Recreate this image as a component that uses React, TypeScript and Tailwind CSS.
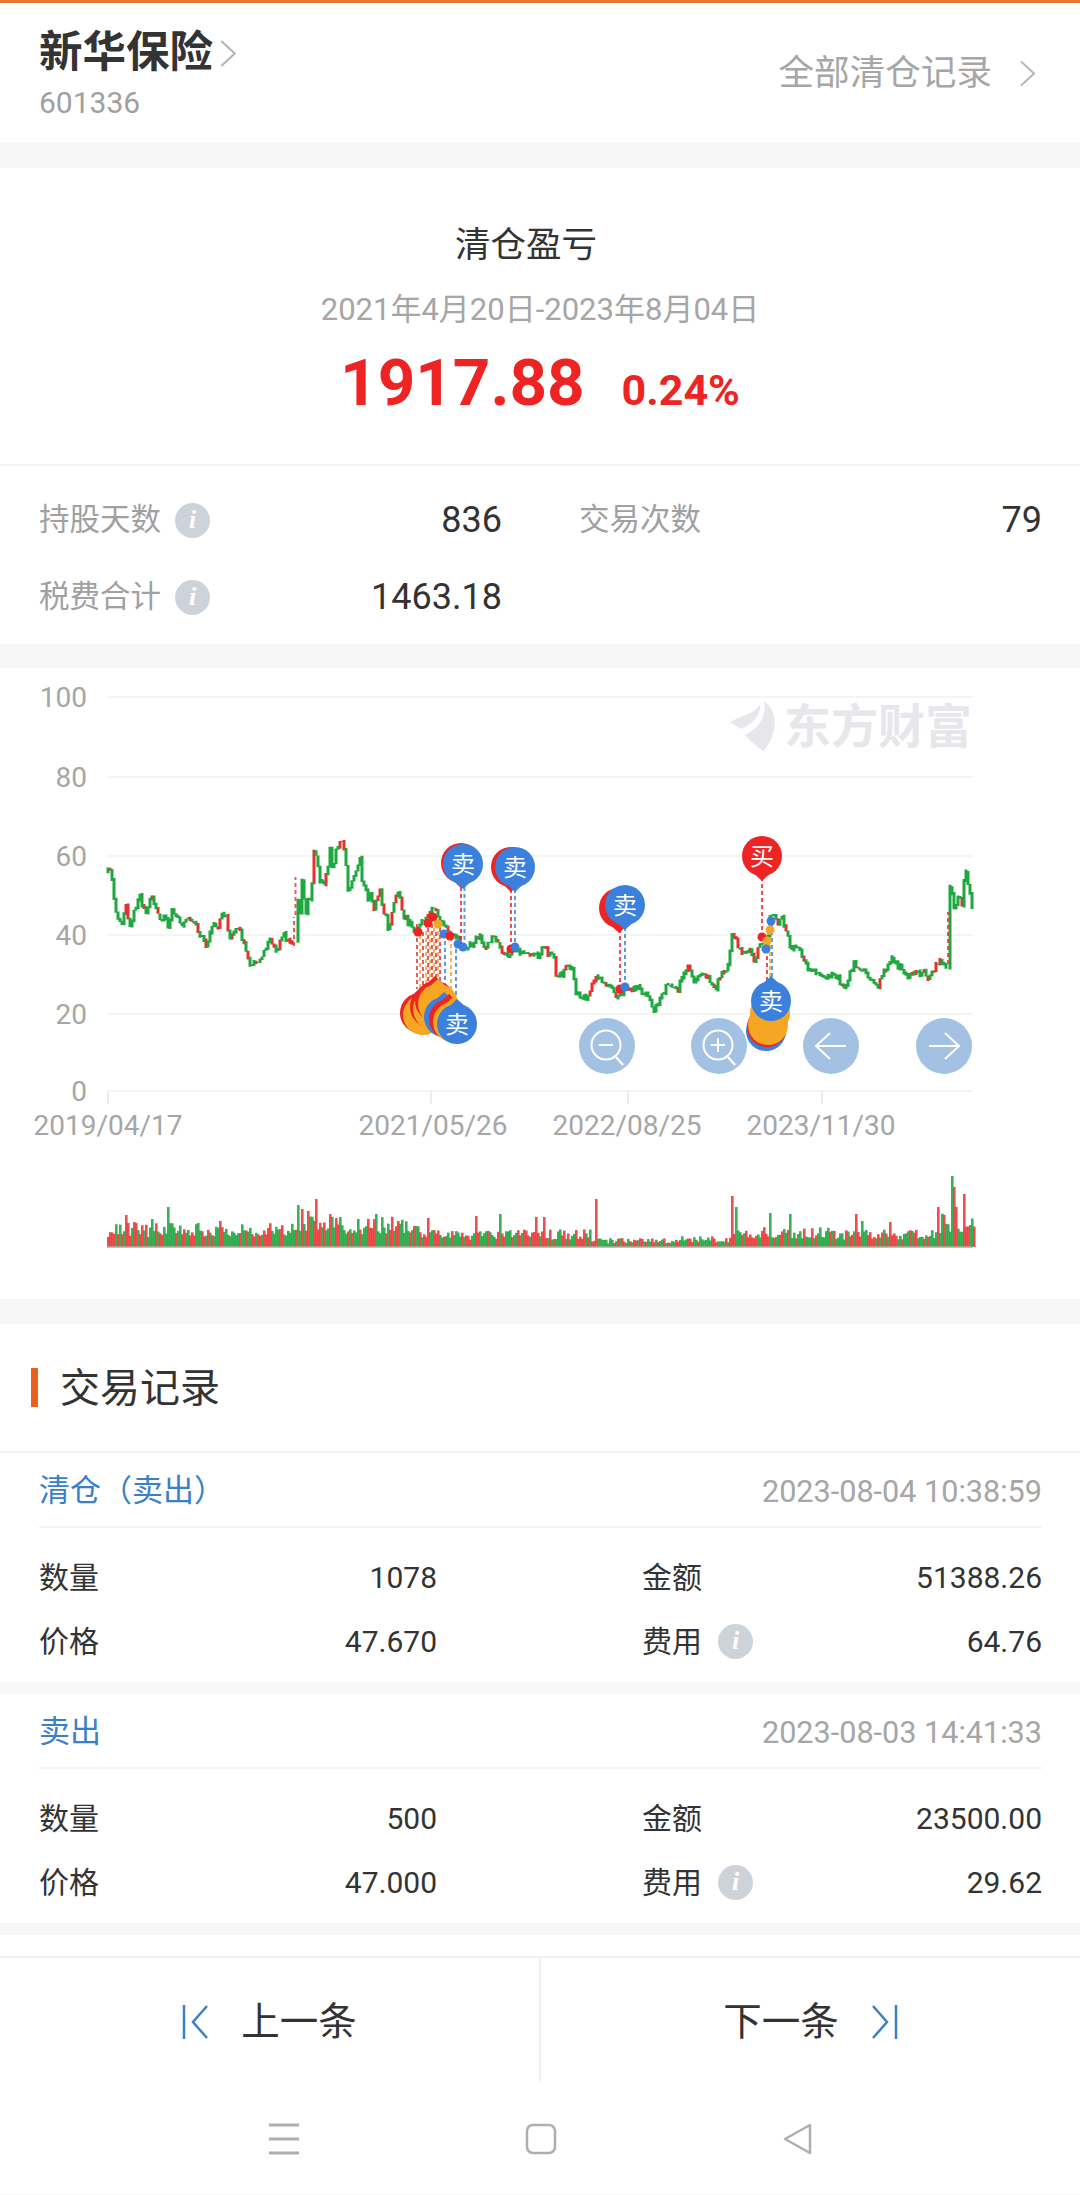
const FONT = "[font-family:Roboto,'Noto_Sans_CJK_SC',sans-serif]";

// 简单的伪随机，保证每次渲染的 K 线一样
function makeRandom(seed: number) {
  let s = seed;
  return () => {
    s = (s * 16807) % 2147483647;
    return s / 2147483647;
  };
}

const pricePoints: [number, number][] = [
  [108, 873], [110, 868], [114, 898], [115, 908], [121, 927], [126, 907], [130, 928], [139, 895], [145, 913], [152, 897],
  [160, 923], [165, 913], [168, 928], [172, 913], [181, 927], [186, 917], [193, 923], [206, 945], [213, 927], [219, 933],
  [220, 917], [227, 917], [229, 942], [238, 928], [244, 943], [251, 968], [262, 955], [270, 940], [277, 952], [282, 935],
  [293, 945], [296, 890], [300, 913], [302, 885], [306, 917], [313, 880], [314, 850], [320, 880], [325, 888], [330, 848],
  [332, 870], [340, 840], [344, 850], [348, 890], [355, 877], [360, 862], [363, 887], [374, 905], [379, 888], [389, 930],
  [396, 893], [406, 920], [417, 933], [432, 908], [444, 928], [458, 938], [463, 953], [479, 937], [486, 950], [494, 935],
  [503, 958], [517, 952], [540, 958], [542, 947], [554, 960], [557, 980], [568, 967], [573, 970], [576, 995], [586, 1000],
  [595, 980], [604, 982], [617, 997], [635, 988], [647, 995], [653, 1012], [669, 983], [678, 990], [688, 968], [695, 982],
  [705, 975], [717, 990], [719, 978], [728, 968], [732, 932], [743, 958], [750, 947], [755, 963], [760, 943], [767, 943],
  [771, 912], [778, 927], [782, 920], [788, 935], [791, 950], [800, 950], [807, 968], [826, 980], [834, 975], [845, 990],
  [854, 963], [867, 975], [877, 988], [891, 958], [907, 977], [924, 973], [929, 982], [939, 962], [947, 967], [950, 885],
  [955, 913], [957, 895], [962, 908], [965, 867], [973, 913],
];

function priceAt(x: number) {
  for (let i = 1; i < pricePoints.length; i++) {
    const [x0, y0] = pricePoints[i - 1];
    const [x1, y1] = pricePoints[i];
    if (x <= x1) return y0 + ((y1 - y0) * (x - x0)) / (x1 - x0);
  }
  return 913;
}

function buildCandles() {
  const rnd = makeRandom(4711);
  let green = "";
  let red = "";
  let prev = priceAt(108);
  for (let x = 108; x <= 973; x += 2) {
    // 两段跳空用虚线单独画
    if ((x > 293 && x < 297) || (x > 947 && x < 950)) continue;
    // 2020 年波动大，抖动也放大一点
    const swing = x > 295 && x < 420 ? 12 : 7;
    const y = priceAt(x) + (rnd() - 0.5) * swing;
    const top = Math.min(prev, y) - rnd() * 2;
    const bottom = Math.max(prev, y) + rnd() * 2;
    const seg = `M${x} ${top.toFixed(1)}V${bottom.toFixed(1)}`;
    if (rnd() < 0.2) red += seg;
    else green += seg;
    prev = y;
  }
  return { green, red };
}

const volumeSpikes: Record<number, { h: number; up: boolean }> = {
  125: { h: 32, up: true }, 133: { h: 25, up: true }, 151: { h: 28, up: false }, 167: { h: 40, up: false },
  219: { h: 26, up: true }, 297: { h: 42, up: false }, 301: { h: 38, up: true }, 307: { h: 36, up: true },
  315: { h: 48, up: true }, 329: { h: 33, up: true }, 357: { h: 28, up: false }, 375: { h: 33, up: false },
  397: { h: 26, up: true }, 427: { h: 29, up: true }, 475: { h: 31, up: true }, 499: { h: 33, up: false },
  535: { h: 30, up: true }, 543: { h: 30, up: true }, 595: { h: 48, up: true }, 731: { h: 51, up: true },
  735: { h: 40, up: false }, 769: { h: 34, up: false }, 789: { h: 33, up: false }, 855: { h: 33, up: true },
  861: { h: 26, up: false }, 889: { h: 25, up: true }, 937: { h: 40, up: true }, 951: { h: 71, up: false },
  953: { h: 60, up: true }, 955: { h: 40, up: true }, 963: { h: 53, up: true }, 969: { h: 22, up: false },
};

function volumeBase(x: number) {
  if (x < 294) return 22;
  if (x < 420) return 28;
  if (x < 590) return 16;
  if (x < 680) return 8;
  if (x < 730) return 10;
  if (x < 830) return 18;
  if (x < 940) return 16;
  return 32;
}

function buildVolumes() {
  const rnd = makeRandom(2024);
  const bars: { x: number; h: number; up: boolean }[] = [];
  for (let x = 107; x <= 973; x += 2) {
    const spike = volumeSpikes[x];
    const base = volumeBase(x);
    const r = rnd();
    const up = rnd() < 0.45;
    if (spike) bars.push({ x, h: spike.h, up: spike.up });
    else bars.push({ x, h: base * (0.45 + r * 0.65), up });
  }
  return bars;
}

const candles = buildCandles();
const volumes = buildVolumes();

const BLUE = "#3a80dc";
const RED = "#ee2424";
const ORANGE = "#f5a623";

function Pin({ x, y, color, label, up }: { x: number; y: number; color: string; label?: string; up?: boolean }) {
  const tip = up ? y - 25 : y + 25;
  const side = up ? y - 9 : y + 9;
  return (
    <g>
      <path d={`M${x - 17} ${side}L${x} ${tip}L${x + 17} ${side}Z`} fill={color} />
      <circle cx={x} cy={y} r={20} fill={color} />
      {label && (
        <text x={x} y={y + 1} fill="#fff" fontSize={24} textAnchor="middle" dominantBaseline="central">
          {label}
        </text>
      )}
    </g>
  );
}

function DashLine({ x, y1, y2, color }: { x: number; y1: number; y2: number; color: string }) {
  return <line x1={x} x2={x} y1={y1} y2={y2} stroke={color} strokeWidth={2} strokeDasharray="4 3" opacity={0.8} />;
}

function Dot({ x, y, color }: { x: number; y: number; color: string }) {
  return <circle cx={x} cy={y} r={4.5} fill={color} />;
}

function ZoomButton({ x, plus }: { x: number; plus?: boolean }) {
  return (
    <g stroke="#fff" strokeWidth={2} fill="none">
      <circle cx={x} cy={1047} r={28} fill="#a3c2e3" stroke="none" />
      <circle cx={x - 1} cy={1046} r={14.5} />
      <path d={`M${x + 9} ${1058}L${x + 16} ${1066}`} />
      <path d={`M${x - 8} 1046H${x + 6}`} />
      {plus && <path d={`M${x - 1} 1039V1053`} />}
    </g>
  );
}

function ArrowButton({ x, right }: { x: number; right?: boolean }) {
  const d = right
    ? `M${x - 15} 1047H${x + 15}M${x + 1} 1034L${x + 15} 1047L${x + 1} 1060`
    : `M${x + 15} 1047H${x - 15}M${x - 1} 1034L${x - 15} 1047L${x - 1} 1060`;
  return (
    <g stroke="#fff" strokeWidth={2} fill="none">
      <circle cx={x} cy={1047} r={28} fill="#a3c2e3" stroke="none" />
      <path d={d} />
    </g>
  );
}

function TradeChart() {
  const grid = [
    { y: 698, label: "100" },
    { y: 778, label: "80" },
    { y: 857, label: "60" },
    { y: 936, label: "40" },
    { y: 1015, label: "20" },
    { y: 1092, label: "0" },
  ];
  const ticks = [
    { x: 108, label: "2019/04/17", tx: 108 },
    { x: 431, label: "2021/05/26", tx: 433 },
    { x: 628, label: "2022/08/25", tx: 627 },
    { x: 822, label: "2023/11/30", tx: 821 },
  ];
  return (
    <svg viewBox="0 669 1080 631" className="block h-[631px] w-[1080px]">
      {grid.map((g) => (
        <g key={g.y}>
          <line x1={108} x2={973} y1={g.y} y2={g.y} stroke="#f4f4f5" strokeWidth={2} />
          <text x={87} y={g.y} fill="#a6a6a6" fontSize={28} textAnchor="end" dominantBaseline="central">
            {g.label}
          </text>
        </g>
      ))}
      {ticks.map((t) => (
        <g key={t.x}>
          <line x1={t.x} x2={t.x} y1={1092} y2={1105} stroke="#ececec" strokeWidth={2} />
          <text x={t.tx} y={1126} fill="#a6a6a6" fontSize={28} textAnchor="middle" dominantBaseline="central">
            {t.label}
          </text>
        </g>
      ))}

      {/* 水印 */}
      <path d="M764 702C778 712 779 732 764 752C757 748 750 742 745 736C758 730 767 718 764 702Z" fill="#e7e7eb" />
      <path d="M730 723C742 716 752 716 760 706C761 716 752 726 741 730Z" fill="#e7e7eb" />
      <text x={784} y={727} fill="#e7e7eb" fontSize={47} fontWeight={700} dominantBaseline="central">
        东方财富
      </text>

      <path d={candles.red} stroke="#e8302f" strokeWidth={3} fill="none" />
      <path d={candles.green} stroke="#1fa83f" strokeWidth={3} fill="none" />
      <DashLine x={294} y1={947} y2={918} color="#e8302f" />
      <DashLine x={295.5} y1={916} y2={878} color="#e8302f" />
      <DashLine x={948} y1={965} y2={913} color="#e8302f" />

      {/* 成交量 */}
      {volumes.map((v) => (
        <rect key={v.x} x={v.x} y={1248 - v.h} width={2.6} height={v.h} fill={v.up ? "#ee3a3a" : "#22a845"} opacity={0.9} />
      ))}
      <line x1={107} x2={973} y1={1248} y2={1248} stroke="#b9a9a0" strokeWidth={1.5} />

      {/* 5 月附近的一簇买卖点 */}
      {[417, 420, 423, 426, 428, 430, 432, 434, 436, 438, 440].map((x, i) => (
        <DashLine key={x} x={x} y1={925 + (i % 3) * 4} y2={990} color={i % 2 ? "#f2a13a" : "#e8302f"} />
      ))}
      <DashLine x={445} y1={935} y2={1000} color={BLUE} />
      <DashLine x={451} y1={938} y2={1000} color={ORANGE} />
      <DashLine x={456} y1={943} y2={1005} color={BLUE} />
      <Dot x={418} y={933} color={RED} />
      <Dot x={428} y={924} color={RED} />
      <Dot x={433} y={918} color={RED} />
      <Dot x={438} y={925} color={ORANGE} />
      <Dot x={444} y={935} color={BLUE} />
      <Dot x={450} y={937} color={RED} />
      <Dot x={458} y={945} color={BLUE} />
      <Dot x={463} y={948} color={BLUE} />
      <Dot x={511} y={950} color={RED} />
      <Dot x={515} y={948} color={BLUE} />

      <Pin x={420} y={1014} color={RED} up />
      <Pin x={423} y={1016} color={ORANGE} up />
      <Pin x={430} y={1008} color={RED} up />
      <Pin x={433} y={1010} color={ORANGE} up />
      <Pin x={435} y={1002} color={RED} up />
      <Pin x={438} y={1005} color={ORANGE} up />
      <Pin x={444} y={1018} color={BLUE} up />
      <Pin x={449} y={1020} color={RED} up />
      <Pin x={453} y={1023} color={ORANGE} up />
      <Pin x={457} y={1025} color={BLUE} up label="卖" />

      <DashLine x={461} y1={888} y2={945} color={RED} />
      <DashLine x={464.5} y1={888} y2={945} color={BLUE} />
      <Pin x={461} y={864} color={RED} />
      <Pin x={463} y={865} color={BLUE} label="卖" />
      <DashLine x={511} y1={890} y2={948} color={RED} />
      <DashLine x={515} y1={890} y2={948} color={BLUE} />
      <Pin x={511} y={868} color={RED} />
      <Pin x={515} y={868} color={BLUE} label="卖" />

      <DashLine x={620} y1={930} y2={990} color={RED} />
      <DashLine x={625} y1={928} y2={988} color={BLUE} />
      <Dot x={620} y={990} color={RED} />
      <Dot x={625} y={988} color={BLUE} />
      <Pin x={619} y={909} color={RED} />
      <Pin x={625} y={906} color={BLUE} label="卖" />

      <DashLine x={762} y1={878} y2={938} color={RED} />
      <Dot x={762} y={938} color={RED} />
      <Pin x={762} y={857} color={RED} label="买" />

      <ZoomButton x={607} />
      <ZoomButton x={719} plus />
      <ArrowButton x={831} />
      <ArrowButton x={944} right />

      <DashLine x={767} y1={950} y2={990} color={RED} />
      <DashLine x={770} y1={925} y2={985} color={ORANGE} />
      <DashLine x={772} y1={925} y2={985} color={BLUE} />
      <Dot x={771} y={922} color={BLUE} />
      <Dot x={770} y={931} color={ORANGE} />
      <Dot x={767} y={942} color={ORANGE} />
      <Dot x={766} y={950} color={BLUE} />
      <Pin x={766} y={1032} color={BLUE} up />
      <Pin x={767} y={1028} color={RED} up />
      <Pin x={768} y={1026} color={ORANGE} up />
      <Pin x={770} y={1014} color={ORANGE} up />
      <Pin x={771} y={1002} color={BLUE} up label="卖" />
    </svg>
  );
}

function InfoIcon() {
  return (
    <span className="flex h-[35px] w-[35px] shrink-0 items-center justify-center rounded-full bg-[#ced3da] text-[26px] font-bold italic leading-none text-white [font-family:'Liberation_Serif',serif]">
      i
    </span>
  );
}

function Chevron({ className }: { className: string }) {
  return (
    <svg viewBox="0 0 16 28" fill="none" stroke="#b3b3b3" strokeWidth={2} className={className}>
      <path d="M1 1L15 14L1 27" />
    </svg>
  );
}

function Stat({ label, value, info }: { label: string; value: string; info?: boolean }) {
  return (
    <div className="flex h-10 flex-1 items-center">
      <span className="text-[30.5px] text-[#a0a0a0]">{label}</span>
      {info && (
        <span className="ml-[14px]">
          <InfoIcon />
        </span>
      )}
      <span className="ml-auto text-[36px] text-[#333]">{value}</span>
    </div>
  );
}

type Trade = {
  kind: string;
  time: string;
  amount: string;
  total: string;
  price: string;
  fee: string;
};

const trades: Trade[] = [
  { kind: "清仓（卖出）", time: "2023-08-04 10:38:59", amount: "1078", total: "51388.26", price: "47.670", fee: "64.76" },
  { kind: "卖出", time: "2023-08-03 14:41:33", amount: "500", total: "23500.00", price: "47.000", fee: "29.62" },
];

function TradeRow({ label, value, info }: { label: string; value: string; info?: boolean }) {
  return (
    <div className="flex h-16 items-center">
      <span className="text-[30px] text-[#333]">{label}</span>
      {info && (
        <span className="ml-[16px]">
          <InfoIcon />
        </span>
      )}
      <span className="ml-auto text-[30px] text-[#333]">{value}</span>
    </div>
  );
}

function TradeCard({ trade }: { trade: Trade }) {
  return (
    <div className="h-[229px] bg-white pl-[39px] pr-[38px]">
      <div className="flex h-[75px] items-center justify-between border-b-2 border-[#f4f4f4] pt-[4px]">
        <span className="text-[31px] text-[#3a80c8]">{trade.kind}</span>
        <span className="text-[30.6px] text-[#a6a6a6]">{trade.time}</span>
      </div>
      <div className="flex pt-[17px]">
        <div className="w-[398px]">
          <TradeRow label="数量" value={trade.amount} />
          <TradeRow label="价格" value={trade.price} />
        </div>
        <div className="ml-[205px] flex-1">
          <TradeRow label="金额" value={trade.total} />
          <TradeRow label="费用" value={trade.fee} info />
        </div>
      </div>
    </div>
  );
}

export default function App() {
  return (
    <div className={`${FONT} h-[2195px] w-[1080px] overflow-hidden bg-[#f7f7f7]`}>
      <div className="h-[3px] bg-[#e8792e]" />

      {/* 顶部股票名 */}
      <div className="flex h-[139px] items-center justify-between bg-white px-[39px] pt-[3px]">
        <div>
          <div className="flex h-[52px] items-center">
            <span className="text-[43.5px] font-bold text-[#333]">新华保险</span>
            <Chevron className="ml-[7px] h-[27px] w-[16px]" />
          </div>
          <div className="mt-[6px] text-[30px] leading-9 text-[#a0a0a0]">601336</div>
        </div>
        <div className="flex items-center">
          <span className="text-[35.6px] text-[#a6a6a6]">全部清仓记录</span>
          <Chevron className="ml-[28px] mr-[6px] h-[27px] w-[15px]" />
        </div>
      </div>

      <div className="mt-[26px] bg-white">
        <div className="flex h-[298px] flex-col items-center border-b-2 border-[#f5f5f5] pt-[53px]">
          <div className="mr-[28px] text-[35.5px] leading-[48px] text-[#333]">清仓盈亏</div>
          <div className="mt-[21px] text-[31px] leading-10 text-[#a6a6a6]">2021年4月20日-2023年8月04日</div>
          <div className="mt-[15px] flex h-[76px] items-baseline gap-[37px]">
            <span className="text-[65.5px] font-bold leading-[76px] text-[#ee2424]">1917.88</span>
            <span className="text-[43px] font-bold leading-[76px] text-[#ee2424]">0.24%</span>
          </div>
        </div>
        <div className="flex flex-col gap-[37px] pl-[39px] pr-[38px] pt-[34px] pb-[27px]">
          <div className="flex gap-[77px]">
            <Stat label="持股天数" value="836" info />
            <Stat label="交易次数" value="79" />
          </div>
          <div className="flex gap-[77px]">
            <Stat label="税费合计" value="1463.18" info />
            <div className="flex-1" />
          </div>
        </div>
      </div>

      <div className="mt-[24px] bg-white">
        <TradeChart />
      </div>

      <div className="mt-[25px] flex h-[129px] items-center border-b-2 border-[#f4f4f4] bg-white pl-[31px]">
        <span className="h-[39px] w-[7px] bg-[#e8601c]" />
        <span className="ml-[22px] pt-[3px] text-[40px] text-[#333]">交易记录</span>
      </div>

      <TradeCard trade={trades[0]} />
      <div className="mt-[12px]">
        <TradeCard trade={trades[1]} />
      </div>

      <div className="mt-[12px] h-[259px] bg-white pt-[21px]">
        <div className="flex h-[125px] border-t-2 border-[#f2f2f2]">
          <div className="flex flex-1 items-center justify-center gap-[33px] border-r-2 border-[#f0f0f0] pt-[4px]">
            <svg viewBox="0 0 26 34" fill="none" stroke="#3a80c8" strokeWidth={2.5} className="h-[34px] w-[26px]">
              <path d="M2 0V34M25 1L11 17L25 33" />
            </svg>
            <span className="text-[38.5px] text-[#333]">上一条</span>
          </div>
          <div className="flex flex-1 items-center justify-center gap-[33px] pt-[4px]">
            <span className="text-[38.5px] text-[#333]">下一条</span>
            <svg viewBox="0 0 26 34" fill="none" stroke="#3a80c8" strokeWidth={2.5} className="h-[34px] w-[26px]">
              <path d="M24 0V34M1 1L15 17L1 33" />
            </svg>
          </div>
        </div>

        {/* 系统导航条 */}
        <div className="flex h-[113px] items-center justify-center gap-[225px] pl-[2px] pt-[3px]">
          <svg viewBox="0 0 32 32" fill="none" stroke="#aeaeae" strokeWidth={3} className="h-8 w-8">
            <path d="M1 2H31M1 16H31M1 30H31" />
          </svg>
          <svg viewBox="0 0 32 32" fill="none" stroke="#aeaeae" strokeWidth={2.5} className="h-8 w-8">
            <rect x="2" y="2" width="28" height="28" rx="6" />
          </svg>
          <svg viewBox="0 0 32 32" fill="none" stroke="#aeaeae" strokeWidth={2.5} strokeLinejoin="round" className="h-8 w-8">
            <path d="M28 2V30L3 16Z" />
          </svg>
        </div>
      </div>
    </div>
  );
}
